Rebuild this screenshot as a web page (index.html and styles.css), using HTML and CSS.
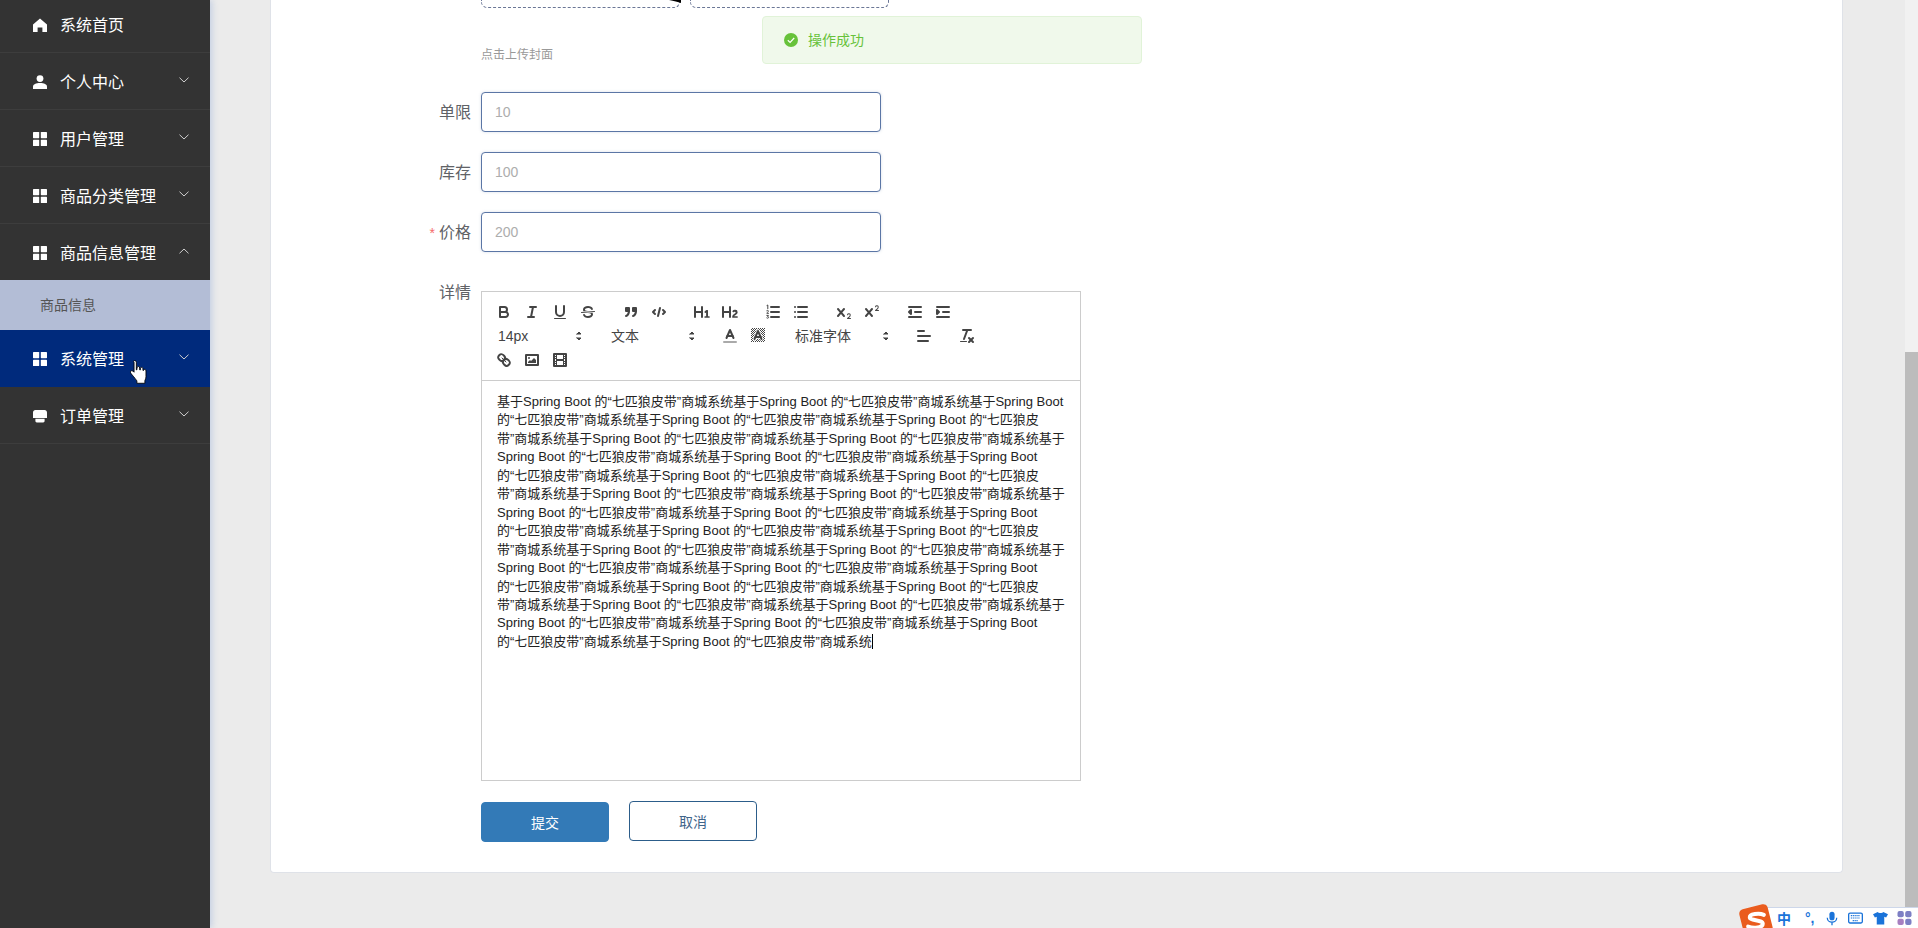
FILE: index.html
```html
<!DOCTYPE html>
<html lang="zh-CN">
<head>
<meta charset="utf-8">
<title>商品信息</title>
<link rel="stylesheet" href="styles.css">
</head>
<body>
<div class="app">
  <aside class="sidebar">
    <ul class="menu">
      <li class="menu-item">
        <svg class="menu-icon" viewBox="0 0 14 14"><path d="M7 0.5 0 6.6V14h4.6V9.6h4.8V14H14V6.6Z"/></svg>
        <span class="menu-text">系统首页</span>
      </li>
      <li class="menu-item">
        <svg class="menu-icon" viewBox="0 0 14 14"><circle cx="7" cy="3.6" r="3.4"/><path d="M0 14v-2.4C0 9.2 3 7.9 7 7.9s7 1.3 7 3.7V14Z"/></svg>
        <span class="menu-text">个人中心</span>
        <svg class="chev" viewBox="0 0 10 6"><path d="M.5.7 5 5 9.5.7"/></svg>
      </li>
      <li class="menu-item">
        <svg class="menu-icon" viewBox="0 0 14 14"><rect width="6.2" height="6.2" rx=".6"/><rect x="7.8" width="6.2" height="6.2" rx=".6"/><rect y="7.8" width="6.2" height="6.2" rx=".6"/><rect x="7.8" y="7.8" width="6.2" height="6.2" rx=".6"/></svg>
        <span class="menu-text">用户管理</span>
        <svg class="chev" viewBox="0 0 10 6"><path d="M.5.7 5 5 9.5.7"/></svg>
      </li>
      <li class="menu-item">
        <svg class="menu-icon" viewBox="0 0 14 14"><rect width="6.2" height="6.2" rx=".6"/><rect x="7.8" width="6.2" height="6.2" rx=".6"/><rect y="7.8" width="6.2" height="6.2" rx=".6"/><rect x="7.8" y="7.8" width="6.2" height="6.2" rx=".6"/></svg>
        <span class="menu-text">商品分类管理</span>
        <svg class="chev" viewBox="0 0 10 6"><path d="M.5.7 5 5 9.5.7"/></svg>
      </li>
      <li class="menu-item menu-item-open">
        <svg class="menu-icon" viewBox="0 0 14 14"><rect width="6.2" height="6.2" rx=".6"/><rect x="7.8" width="6.2" height="6.2" rx=".6"/><rect y="7.8" width="6.2" height="6.2" rx=".6"/><rect x="7.8" y="7.8" width="6.2" height="6.2" rx=".6"/></svg>
        <span class="menu-text">商品信息管理</span>
        <svg class="chev" viewBox="0 0 10 6"><path d="M.5 5.3 5 1l4.5 4.3"/></svg>
      </li>
      <li class="submenu-item">商品信息</li>
      <li class="menu-item menu-item-hover">
        <svg class="menu-icon" viewBox="0 0 14 14"><rect width="6.2" height="6.2" rx=".6"/><rect x="7.8" width="6.2" height="6.2" rx=".6"/><rect y="7.8" width="6.2" height="6.2" rx=".6"/><rect x="7.8" y="7.8" width="6.2" height="6.2" rx=".6"/></svg>
        <span class="menu-text">系统管理</span>
        <svg class="chev" viewBox="0 0 10 6"><path d="M.5.7 5 5 9.5.7"/></svg>
      </li>
      <li class="menu-item">
        <svg class="menu-icon" viewBox="0 0 14 14"><path d="M2.4 1h9.2C13 1 14 2 14 3.4V9H0V3.4C0 2 1 1 2.4 1ZM2.4 9.800h9.200V12c0 .9-.6 1.400-1.400 1.400H3.800c-.8 0-1.400-.5-1.400-1.400Z"/></svg>
        <span class="menu-text">订单管理</span>
        <svg class="chev" viewBox="0 0 10 6"><path d="M.5.7 5 5 9.5.7"/></svg>
      </li>
    </ul>
  </aside>

  <main class="main">
    <section class="card">
      <div class="upload-row">
        <div class="upload-box"></div>
        <div class="upload-box"></div>
      </div>
      <p class="upload-hint">点击上传封面</p>

      <div class="form-item">
        <label class="form-label">单限</label>
        <input class="form-input" placeholder="10">
      </div>
      <div class="form-item">
        <label class="form-label">库存</label>
        <input class="form-input" placeholder="100">
      </div>
      <div class="form-item">
        <label class="form-label form-label-required">价格</label>
        <input class="form-input" placeholder="200">
      </div>

      <div class="form-item form-item-editor">
        <label class="form-label form-label-top">详情</label>
        <div class="editor">
          <div class="toolbar">
            <div class="tb-row">
              <span class="tb-group">
                <svg class="tb-btn" viewBox="0 0 18 18"><path class="s" d="M5,4H9.5A2.5,2.5,0,0,1,12,6.5v0A2.5,2.5,0,0,1,9.5,9H5A0,0,0,0,1,5,9V4A0,0,0,0,1,5,4Z"/><path class="s" d="M5,9h5.5A2.5,2.5,0,0,1,13,11.5v0A2.5,2.5,0,0,1,10.5,14H5a0,0,0,0,1,0,0V9A0,0,0,0,1,5,9Z"/></svg>
                <svg class="tb-btn" viewBox="0 0 18 18"><line class="s" x1="7" x2="13" y1="4" y2="4"/><line class="s" x1="5" x2="11" y1="14" y2="14"/><line class="s" x1="8" x2="10" y1="14" y2="4"/></svg>
                <svg class="tb-btn" viewBox="0 0 18 18"><path class="s" d="M5,3V9a4.012,4.012,0,0,0,4,4H9a4.012,4.012,0,0,0,4-4V3"/><rect class="f" height="1" rx=".5" ry=".5" width="12" x="3" y="15"/></svg>
                <svg class="tb-btn" viewBox="0 0 18 18"><line class="s t" x1="15.5" x2="2.5" y1="8.5" y2="9.5"/><path class="f" d="M9.007,8C6.542,7.791,6,7.519,6,6.5,6,5.792,7.283,5,9,5c1.571,0,2.765.679,2.969,1.309a1,1,0,0,0,1.9-.617C13.356,4.106,11.354,3,9,3,6.2,3,4,4.538,4,6.5a3.2,3.2,0,0,0,.5,1.843Z"/><path class="f" d="M8.984,10C11.457,10.208,12,10.479,12,11.5c0,.708-1.283,1.5-3,1.5-1.571,0-2.765-.679-2.969-1.309a1,1,0,1,0-1.9.617C4.644,13.894,6.646,15,9,15c2.8,0,5-1.538,5-3.5a3.2,3.2,0,0,0-.5-1.843Z"/></svg>
              </span>
              <span class="tb-group">
                <svg class="tb-btn" viewBox="0 0 18 18"><rect class="f s" height="3" width="3" x="4" y="5"/><rect class="f s" height="3" width="3" x="11" y="5"/><path class="f s" d="M7,8c0,4.031-3,5-3,5"/><path class="f s" d="M14,8c0,4.031-3,5-3,5"/></svg>
                <svg class="tb-btn" viewBox="0 0 18 18"><polyline class="s" points="5 7 3 9 5 11"/><polyline class="s" points="13 7 15 9 13 11"/><line class="s" x1="10" x2="8" y1="5" y2="13"/></svg>
              </span>
              <span class="tb-group">
                <svg class="tb-btn" viewBox="0 0 18 18"><path class="f" d="M10,4V14a1,1,0,0,1-2,0V10H3v4a1,1,0,0,1-2,0V4A1,1,0,0,1,3,4V8H8V4a1,1,0,0,1,2,0Zm6.06787,9.209H14.98975V7.59863a.54085.54085,0,0,0-.605-.60547h-.62744a1.01119,1.01119,0,0,0-.748.29688L11.645,8.56641a.5435.5435,0,0,0-.022.8584l.28613.30762a.53861.53861,0,0,0,.84717.0332l.09912-.08789a1.2137,1.2137,0,0,0,.2417-.35254h.02246s-.01123.30859-.01123.60547V13.209H12.041a.54085.54085,0,0,0-.605.60547v.43945a.54085.54085,0,0,0,.605.60547h4.02686a.54085.54085,0,0,0,.605-.60547v-.43945A.54085.54085,0,0,0,16.06787,13.209Z"/></svg>
                <svg class="tb-btn" viewBox="0 0 18 18"><path class="f" d="M16.73975,13.81445v.43945a.54085.54085,0,0,1-.605.60547H11.855a.58392.58392,0,0,1-.64893-.60547V14.0127c0-2.90527,3.39941-3.42187,3.39941-4.55469a.77675.77675,0,0,0-.84717-.78125,1.17684,1.17684,0,0,0-.83594.38477c-.2749.26367-.561.374-.85791.13184l-.4292-.34082c-.30811-.24219-.38525-.51758-.1543-.81445a2.97155,2.97155,0,0,1,2.45361-1.17676,2.45393,2.45393,0,0,1,2.68408,2.40918c0,2.45312-3.1792,2.92676-3.27832,3.93848h2.79443A.54085.54085,0,0,1,16.73975,13.81445ZM9,3A.99974.99974,0,0,0,8,4V8H3V4A1,1,0,0,0,1,4V14a1,1,0,0,0,2,0V10H8v4a1,1,0,0,0,2,0V4A.99974.99974,0,0,0,9,3Z"/></svg>
              </span>
              <span class="tb-group">
                <svg class="tb-btn" viewBox="0 0 18 18"><line class="s" x1="7" x2="15" y1="4" y2="4"/><line class="s" x1="7" x2="15" y1="9" y2="9"/><line class="s" x1="7" x2="15" y1="14" y2="14"/><path class="s t" d="M3 2.400 3.800 2v3.600M2.800 7.600c.6-.5 1.600-.3 1.600.5 0 .8-1.500 1.400-1.600 2.200h1.700M2.800 12.400h1.600l-.8 1.100c.7 0 1 .4 1 .9 0 .8-1.200 1.100-1.800.6"/></svg>
                <svg class="tb-btn" viewBox="0 0 18 18"><line class="s" x1="6" x2="15" y1="4" y2="4"/><line class="s" x1="6" x2="15" y1="9" y2="9"/><line class="s" x1="6" x2="15" y1="14" y2="14"/><line class="s" x1="3" x2="3" y1="4" y2="4"/><line class="s" x1="3" x2="3" y1="9" y2="9"/><line class="s" x1="3" x2="3" y1="14" y2="14"/></svg>
              </span>
              <span class="tb-group">
                <svg class="tb-btn" viewBox="0 0 18 18"><path class="f" d="M15.5,15H13.861a3.858,3.858,0,0,0,1.914-2.975,1.8,1.8,0,0,0-1.6-1.751A1.921,1.921,0,0,0,12.021,11.7a0.50013,0.50013,0,1,0,.957.291h0a0.914,0.914,0,0,1,1.053-.725,0.81,0.81,0,0,1,.744.762c0,1.076-1.16971,1.86982-1.93971,2.43082A1.45639,1.45639,0,0,0,12,15.5a0.5,0.5,0,0,0,.5.5h3A0.5,0.5,0,0,0,15.5,15Z"/><path class="f" d="M9.65,5.241a1,1,0,0,0-1.409.108L6,7.964,3.759,5.349A1,1,0,0,0,2.192,6.59178Q2.21541,6.6213,2.241,6.649L4.684,9.5,2.241,12.35A1,1,0,0,0,3.71,13.70722q0.02557-.02768.049-0.05722L6,11.036,8.241,13.65a1,1,0,1,0,1.567-1.24277Q9.78459,12.3777,9.759,12.35L7.316,9.5,9.759,6.651A1,1,0,0,0,9.65,5.241Z"/></svg>
                <svg class="tb-btn" viewBox="0 0 18 18"><path class="f" d="M15.5,7H13.861a4.015,4.015,0,0,0,1.914-2.975,1.8,1.8,0,0,0-1.6-1.751A1.922,1.922,0,0,0,12.021,3.7a0.5,0.5,0,1,0,.957.291,0.917,0.917,0,0,1,1.053-.725,0.81,0.81,0,0,1,.744.762c0,1.077-1.164,1.925-1.934,2.486A1.423,1.423,0,0,0,12,7.5a0.5,0.5,0,0,0,.5.5h3A0.5,0.5,0,0,0,15.5,7Z"/><path class="f" d="M9.651,5.241a1,1,0,0,0-1.41.108L6,7.964,3.759,5.349a1,1,0,1,0-1.519,1.3L4.683,9.5,2.241,12.35a1,1,0,1,0,1.519,1.3L6,11.036l2.241,2.616a1,1,0,0,0,1.519-1.3L7.317,9.5,9.759,6.651A1,1,0,0,0,9.651,5.241Z"/></svg>
              </span>
              <span class="tb-group">
                <svg class="tb-btn" viewBox="0 0 18 18"><line class="s" x1="3" x2="15" y1="14" y2="14"/><line class="s" x1="3" x2="15" y1="4" y2="4"/><line class="s" x1="9" x2="15" y1="9" y2="9"/><polyline class="f s" points="5 7 5 11 3 9 5 7"/></svg>
                <svg class="tb-btn" viewBox="0 0 18 18"><line class="s" x1="3" x2="15" y1="14" y2="14"/><line class="s" x1="3" x2="15" y1="4" y2="4"/><line class="s" x1="9" x2="15" y1="9" y2="9"/><polyline class="f s" points="3 7 3 11 5 9 3 7"/></svg>
              </span>
            </div>
            <div class="tb-row">
              <span class="tb-group">
                <span class="picker picker-md">14px<svg class="picker-arrow" viewBox="0 0 18 18"><polygon class="f s t" points="7 11 9 13 11 11 7 11"/><polygon class="f s t" points="7 7 9 5 11 7 7 7"/></svg></span>
              </span>
              <span class="tb-group">
                <span class="picker picker-md">文本<svg class="picker-arrow" viewBox="0 0 18 18"><polygon class="f s t" points="7 11 9 13 11 11 7 11"/><polygon class="f s t" points="7 7 9 5 11 7 7 7"/></svg></span>
              </span>
              <span class="tb-group">
                <svg class="tb-btn" viewBox="0 0 18 18"><line class="s label-line" x1="3" x2="15" y1="15" y2="15"/><polyline class="s" points="5.5 11 9 3 12.500 11"/><line class="s" x1="11.63" x2="6.38" y1="9" y2="9"/></svg>
                <svg class="tb-btn" viewBox="0 0 18 18"><defs><pattern id="chk" width="2" height="2" patternUnits="userSpaceOnUse"><rect width="1" height="1" fill="#444"/><rect x="1" y="1" width="1" height="1" fill="#444"/></pattern></defs><rect x="2" y="1" width="14" height="14" fill="url(#chk)"/><polyline class="halo" points="5.5 12 9 4 12.500 12"/><line class="halo" x1="11.63" x2="6.38" y1="10" y2="10"/><polyline class="s" points="5.5 12 9 4 12.500 12"/><line class="s" x1="11.63" x2="6.38" y1="10" y2="10"/></svg>
              </span>
              <span class="tb-group">
                <span class="picker picker-lg">标准字体<svg class="picker-arrow" viewBox="0 0 18 18"><polygon class="f s t" points="7 11 9 13 11 11 7 11"/><polygon class="f s t" points="7 7 9 5 11 7 7 7"/></svg></span>
              </span>
              <span class="tb-group">
                <svg class="tb-btn" viewBox="0 0 18 18"><line class="s" x1="3" x2="15" y1="9" y2="9"/><line class="s" x1="3" x2="13" y1="14" y2="14"/><line class="s" x1="3" x2="9" y1="4" y2="4"/></svg>
              </span>
              <span class="tb-group">
                <svg class="tb-btn" viewBox="0 0 18 18"><line class="s" x1="5" x2="13" y1="3" y2="3"/><line class="s" x1="6" x2="9.35" y1="12" y2="3"/><line class="s" x1="11" x2="15" y1="11" y2="15"/><line class="s" x1="15" x2="11" y1="11" y2="15"/><rect class="f" height="1" rx=".5" ry=".5" width="7" x="2" y="14"/></svg>
              </span>
            </div>
            <div class="tb-row">
              <span class="tb-group">
                <svg class="tb-btn" viewBox="0 0 18 18"><line class="s t" x1="7" x2="11" y1="7" y2="11"/><path class="s" d="M8.9,4.577a3.476,3.476,0,0,1,.36,4.679A3.476,3.476,0,0,1,4.577,8.9C3.185,7.5,2.035,6.4,4.217,4.217S7.5,3.185,8.9,4.577Z"/><path class="s" d="M13.423,9.1a3.476,3.476,0,0,0-4.679-.36,3.476,3.476,0,0,0,.36,4.679c1.392,1.392,2.5,2.542,4.679.36S14.815,10.5,13.423,9.1Z"/></svg>
                <svg class="tb-btn" viewBox="0 0 18 18"><rect class="s" height="10" width="12" x="3" y="4"/><circle class="f" cx="6" cy="7" r="1"/><polyline class="f" points="5 12 5 11 7 9 8 10 11 7 13 9 13 12 5 12"/></svg>
                <svg class="tb-btn" viewBox="0 0 18 18"><rect class="s" height="12" width="12" x="3" y="3"/><rect class="f" height="12" width="1" x="5" y="3"/><rect class="f" height="12" width="1" x="12" y="3"/><rect class="f" height="2" width="8" x="5" y="8"/><rect class="f" height="1" width="3" x="3" y="5"/><rect class="f" height="1" width="3" x="3" y="7"/><rect class="f" height="1" width="3" x="3" y="10"/><rect class="f" height="1" width="3" x="3" y="12"/><rect class="f" height="1" width="3" x="12" y="5"/><rect class="f" height="1" width="3" x="12" y="7"/><rect class="f" height="1" width="3" x="12" y="10"/><rect class="f" height="1" width="3" x="12" y="12"/></svg>
              </span>
            </div>
          </div>
          <div class="editor-body">基于Spring Boot 的“七匹狼皮带”商城系统基于Spring Boot 的“七匹狼皮带”商城系统基于Spring Boot<br>的“七匹狼皮带”商城系统基于Spring Boot 的“七匹狼皮带”商城系统基于Spring Boot 的“七匹狼皮<br>带”商城系统基于Spring Boot 的“七匹狼皮带”商城系统基于Spring Boot 的“七匹狼皮带”商城系统基于<br>Spring Boot 的“七匹狼皮带”商城系统基于Spring Boot 的“七匹狼皮带”商城系统基于Spring Boot<br>的“七匹狼皮带”商城系统基于Spring Boot 的“七匹狼皮带”商城系统基于Spring Boot 的“七匹狼皮<br>带”商城系统基于Spring Boot 的“七匹狼皮带”商城系统基于Spring Boot 的“七匹狼皮带”商城系统基于<br>Spring Boot 的“七匹狼皮带”商城系统基于Spring Boot 的“七匹狼皮带”商城系统基于Spring Boot<br>的“七匹狼皮带”商城系统基于Spring Boot 的“七匹狼皮带”商城系统基于Spring Boot 的“七匹狼皮<br>带”商城系统基于Spring Boot 的“七匹狼皮带”商城系统基于Spring Boot 的“七匹狼皮带”商城系统基于<br>Spring Boot 的“七匹狼皮带”商城系统基于Spring Boot 的“七匹狼皮带”商城系统基于Spring Boot<br>的“七匹狼皮带”商城系统基于Spring Boot 的“七匹狼皮带”商城系统基于Spring Boot 的“七匹狼皮<br>带”商城系统基于Spring Boot 的“七匹狼皮带”商城系统基于Spring Boot 的“七匹狼皮带”商城系统基于<br>Spring Boot 的“七匹狼皮带”商城系统基于Spring Boot 的“七匹狼皮带”商城系统基于Spring Boot<br>的“七匹狼皮带”商城系统基于Spring Boot 的“七匹狼皮带”商城系统<span class="caret"></span></div>
        </div>
      </div>

      <div class="form-actions">
        <button class="btn btn-primary">提交</button>
        <button class="btn btn-plain">取消</button>
      </div>
    </section>
  </main>

  <div class="scrollbar"><div class="scrollbar-thumb"></div></div>
</div>

<div class="message">
  <svg class="message-icon" viewBox="0 0 14 14"><circle cx="7" cy="7" r="7" fill="#67c23a"/><path d="M3.800 7.200 6.100 9.400 10.200 5" fill="none" stroke="#fff" stroke-width="1.200"/></svg>
  <span class="message-text">操作成功</span>
</div>

<svg class="upload-mark" viewBox="0 0 12 3"><path d="M0 0H12V3C9 2 5 .8 0 0Z"/></svg>

<svg class="hand-cursor" viewBox="0 0 17 24"><path d="M5 1.500c.9 0 1.500.7 1.500 1.600V10l.6-.1V8.300c0-1.800 2.500-1.800 2.500 0V10l.6.100V9c0-1.700 2.400-1.700 2.400 0v1.500l.5.100c0-1.400 2.300-1.400 2.300.3v5.500c0 1.500-.5 2.500-1 3.500v2.500H7v-2.200c-1-1.300-2-2.800-3.300-4.300-1-1.100-2.700-2.900-2.700-3.800 0-1.300 1.400-1.700 2.400-.9l1 1V3.100C3.400 2.200 4 1.500 5 1.500Z" fill="#fff" stroke="#000" stroke-width=".8" stroke-linejoin="round"/></svg>

<div class="ime">
  <svg class="ime-logo" viewBox="0 0 32 32"><rect x="3" y="3" width="26" height="26" rx="4" fill="#ea5c1e" transform="rotate(-14 16 16)"/><path d="M23 10.500C19 8.800 10 9.500 10.500 13c.4 3 11.500 1.500 11.500 5.500 0 3.500-8 4.500-13 2.500" fill="none" stroke="#fff" stroke-width="3.600" stroke-linecap="round"/></svg>
  <div class="ime-bar">
    <span class="ime-zh">中</span>
    <span class="ime-punc">°,</span>
    <svg class="ime-icon" viewBox="0 0 14 16"><rect x="4" y="0" width="6" height="10" rx="3" fill="#1a73d9"/><path d="M1.500 7c0 7 11 7 11 0M7 12v4" fill="none" stroke="#1a73d9" stroke-width="1.500"/></svg>
    <svg class="ime-icon ime-icon-wide" viewBox="0 0 16 14"><rect x=".7" y="1.700" width="14.600" height="10.600" rx="1.500" fill="none" stroke="#1a73d9" stroke-width="1.400"/><path d="M3 4.500h10M3 7h10M5 9.800h6" stroke="#1a73d9" stroke-width="1.300" stroke-dasharray="1.300 .7" fill="none"/></svg>
    <svg class="ime-icon ime-icon-wide" viewBox="0 0 16 14"><path d="M5 .5 0 3l2 3.500 2-.8V14h8V5.700l2 .8L16 3 11 .5C10 2 6 2 5 .5Z" fill="#1a73d9"/></svg>
    <svg class="ime-icon ime-icon-apps" viewBox="0 0 14 14"><rect width="6.300" height="6.300" rx="2" fill="#7d7fc4"/><rect x="7.700" width="6.300" height="6.300" rx="2" fill="#7d7fc4"/><rect y="7.700" width="6.300" height="6.300" rx="2" fill="#a77fc0"/><rect x="7.700" y="7.700" width="6.300" height="6.300" rx="2" fill="#7d7fc4"/></svg>
  </div>
</div>
</body>
</html>
```

FILE: styles.css
```css
* { box-sizing: border-box; }

html, body {
  margin: 0;
  height: 100%;
  overflow: hidden;
}

body {
  font-family: "Liberation Sans", "Noto Sans CJK SC", sans-serif;
  background: #ebebeb;
  color: #606266;
}

.app {
  display: flex;
  height: 928px;
}

/* Sidebar */
.sidebar {
  flex: 0 0 210px;
  background: #333;
  overflow: hidden;
  box-shadow: 2px 0 6px rgba(60, 110, 200, .22);
  position: relative;
}

.menu {
  list-style: none;
  margin: -4px 0 0;
  padding: 0;
}

.menu-item {
  height: 57px;
  display: flex;
  align-items: center;
  padding: 3px 0 0 33px;
  color: #fff;
  border-bottom: 1px solid #3d3d3d;
  position: relative;
}

.menu-item-open {
  height: 56px;
  border-bottom: 0;
}

.menu-item-hover {
  background: #002a7c;
  border-bottom-color: #002a7c;
}

.menu-icon {
  width: 14px;
  height: 14px;
  fill: #fff;
  flex: none;
  margin: -1px 13px 0 0;
}

.menu-text {
  font-size: 16px;
  line-height: 22px;
}

.chev {
  position: absolute;
  right: 21px;
  top: 24px;
  width: 10px;
  height: 6px;
  fill: none;
  stroke: #cfcfcf;
  stroke-width: 1;
}

.submenu-item {
  height: 50px;
  line-height: 50px;
  padding-left: 40px;
  font-size: 14px;
  color: #555;
  background: #b3bdd6;
}

/* Main */
.main {
  flex: 1;
  min-width: 0;
  padding: 0 62px 0 60px;
}

.card {
  background: #fff;
  border: 1px solid #dfe2e8;
  border-top: 0;
  border-radius: 0 0 4px 4px;
  height: 873px;
  padding: 0 0 0 80px;
}

.upload-row {
  display: flex;
  gap: 10px;
  margin-left: 130px;
}

.upload-box {
  width: 199px;
  height: 8px;
  border: 1px dashed #6b7796;
  border-top: 0;
  border-radius: 0 0 6px 6px;
}

.upload-hint {
  margin: 39px 0 0 130px;
  font-size: 12px;
  line-height: 16px;
  height: 45px;
  color: #999;
}

.form-item {
  display: flex;
  align-items: flex-start;
  margin-bottom: 20px;
}

.form-label {
  flex: 0 0 120px;
  height: 40px;
  margin-right: 10px;
  text-align: right;
  font-size: 16px;
  line-height: 42px;
  color: #606266;
}

.form-label-required::before {
  content: "*";
  color: #f56c6c;
  margin-right: 4px;
  font-size: 14px;
}

.form-label-top {
  height: 22px;
  line-height: 22px;
  margin-top: -9px;
}

.form-input {
  width: 400px;
  height: 40px;
  border: 1px solid #5b76a5;
  border-radius: 4px;
  padding: 0 13px;
  font: 14px "Liberation Sans", "Noto Sans CJK SC", sans-serif;
  color: #606266;
  outline: 0;
  box-shadow: 0 0 3px rgba(91, 118, 165, .25);
}

.form-input::placeholder { color: #adadad; opacity: 1; }

.form-item-editor {
  margin-top: 39px;
  margin-bottom: 21px;
}

/* Editor */
.editor {
  width: 600px;
  height: 490px;
  border: 1px solid #ccc;
  display: flex;
  flex-direction: column;
}

.toolbar {
  height: 89px;
  padding: 8px;
  border-bottom: 1px solid #ccc;
  flex: none;
}

.tb-row {
  display: flex;
  height: 24px;
}

.tb-group {
  display: inline-flex;
  margin-right: 15px;
}

.tb-btn {
  width: 28px;
  height: 24px;
  padding: 3px 5px;
  flex: none;
}

.s {
  fill: none;
  stroke: #444;
  stroke-width: 2;
  stroke-linecap: round;
  stroke-linejoin: round;
}

.f { fill: #444; }

.t { stroke-width: 1; }

.label-line { stroke: #aaa; }

.halo {
  fill: none;
  stroke: #fff;
  stroke-width: 3.5;
  stroke-linecap: round;
  stroke-linejoin: round;
}

.picker {
  position: relative;
  display: inline-block;
  height: 24px;
  line-height: 24px;
  padding-left: 8px;
  font-size: 14px;
  color: #444;
}

.picker-md { width: 98px; }
.picker-lg { width: 108px; }

.picker-arrow {
  position: absolute;
  right: 0;
  top: 3px;
  width: 18px;
  height: 18px;
}

.editor-body {
  flex: 1;
  padding: 12px 15px;
  font-size: 13px;
  line-height: 1.42;
  color: #222;
  white-space: nowrap;
  overflow: hidden;
}

.caret {
  display: inline-block;
  width: 1px;
  height: 15px;
  background: #000;
  vertical-align: -3px;
}

/* Actions */
.form-actions {
  display: flex;
  align-items: flex-start;
  gap: 20px;
  margin-left: 130px;
}

.btn {
  width: 128px;
  height: 40px;
  border-radius: 4px;
  font: 14px "Liberation Sans", "Noto Sans CJK SC", sans-serif;
  padding: 0;
}

.btn-primary {
  background: #337ab7;
  border: 1px solid #337ab7;
  color: #fff;
}

.btn-plain {
  background: #fff;
  border: 1px solid #2c5d8a;
  color: #40658a;
  margin-top: -1px;
}

/* Scrollbar */
.scrollbar {
  flex: 0 0 13px;
  background: #f1f1f1;
  padding-top: 352px;
}

.scrollbar-thumb {
  height: 100%;
  background: #bcbcbc;
}

/* Overlays */
.message {
  position: absolute;
  left: 762px;
  top: 16px;
  width: 380px;
  height: 48px;
  display: flex;
  align-items: center;
  padding-left: 21px;
  gap: 10px;
  background: #f0f9eb;
  border: 1px solid #e1f3d8;
  border-radius: 4px;
  font-size: 14px;
  color: #67c23a;
}

.message-icon { width: 14px; height: 14px; flex: none; }

.message-text { margin-top: -2px; }

.upload-mark {
  position: absolute;
  left: 669px;
  top: 0;
  width: 12px;
  height: 3px;
  fill: #000;
}

.hand-cursor {
  position: absolute;
  left: 129px;
  top: 359px;
  width: 19px;
  height: 26px;
}

.ime {
  position: absolute;
  right: 0;
  bottom: 0;
  display: flex;
  align-items: flex-end;
}

.ime-logo {
  width: 36px;
  height: 36px;
  margin-right: -9px;
  margin-bottom: -11px;
  position: relative;
  z-index: 1;
}

.ime-bar {
  width: 153px;
  height: 21px;
  background: #fff;
  border-top: 1px solid #cdd7ea;
  display: flex;
  align-items: center;
  padding-left: 12px;
}

.ime-zh {
  font-size: 14px;
  font-weight: 700;
  color: #1a73d9;
  width: 14px;
}

.ime-punc {
  font-size: 14px;
  font-weight: 700;
  color: #1a73d9;
  margin-left: 14px;
  width: 12px;
  line-height: 14px;
}

.ime-icon {
  width: 12px;
  height: 15px;
  margin-left: 9px;
  flex: none;
}

.ime-icon-wide {
  width: 15px;
  height: 14px;
  margin-left: 10px;
}

.ime-icon-apps {
  width: 15px;
  height: 14px;
  margin-left: 9px;
}
```
